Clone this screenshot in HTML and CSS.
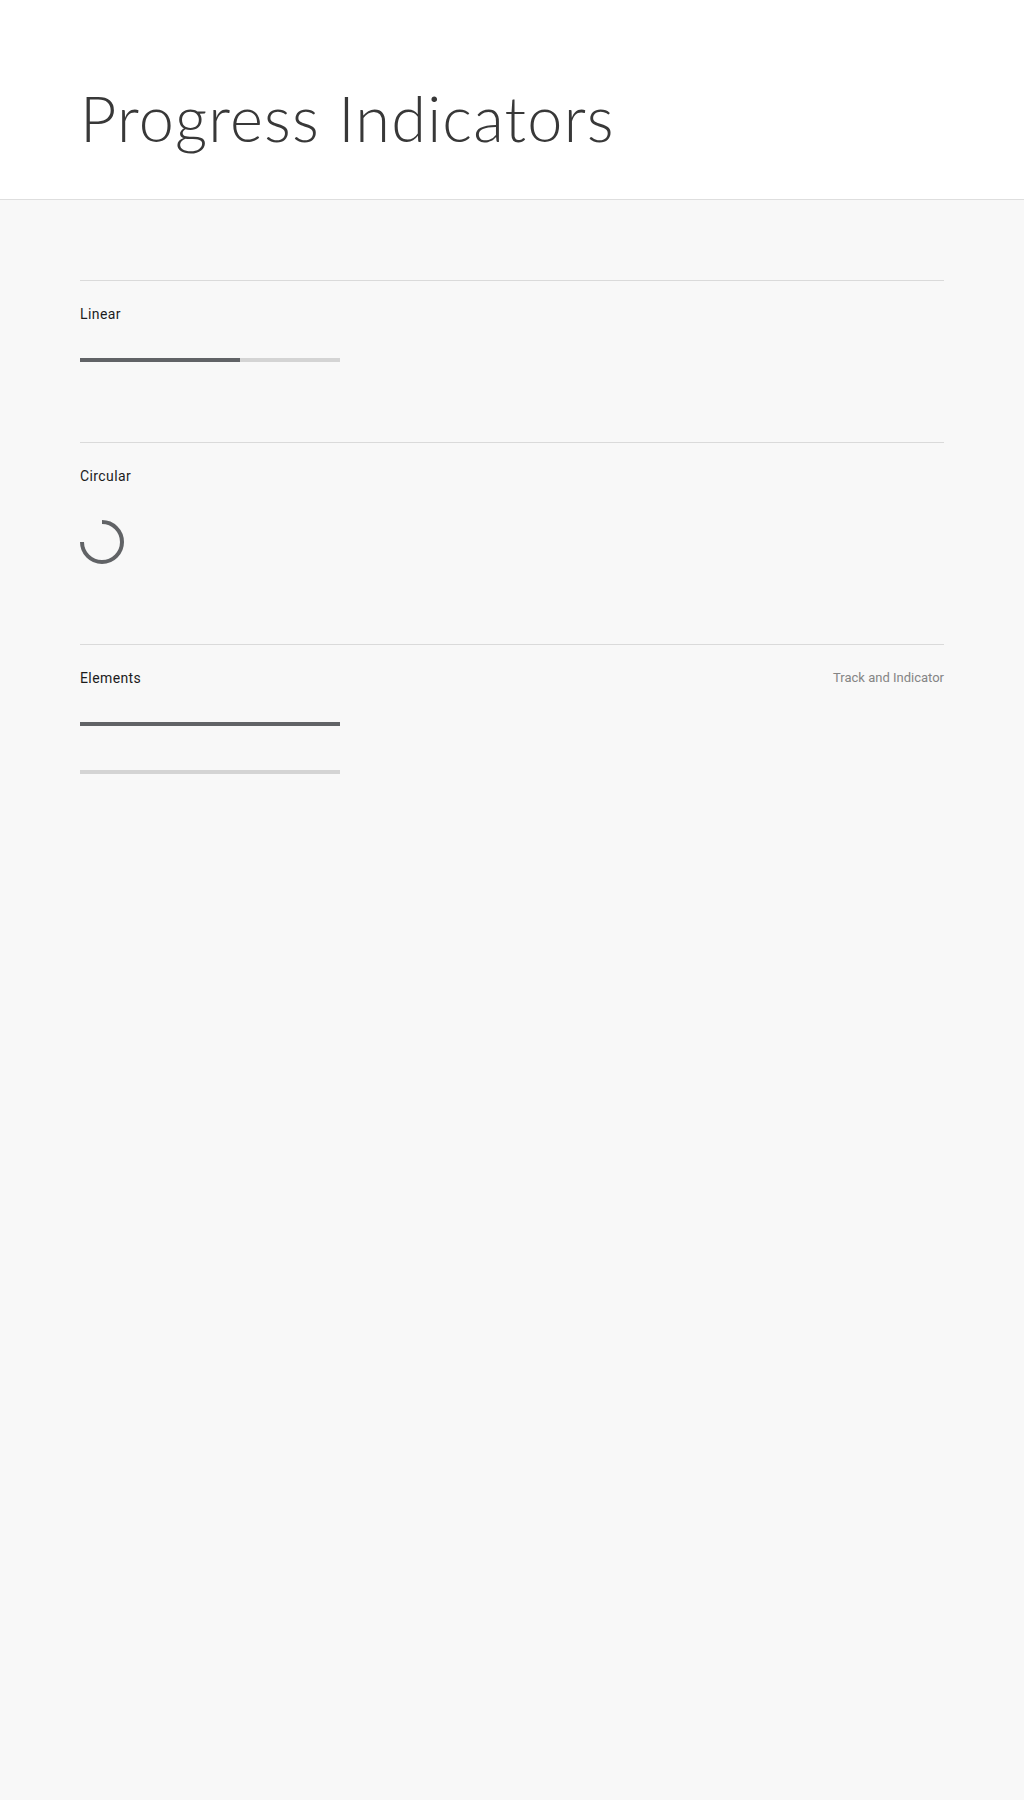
FILE: index.html
```html
<!DOCTYPE html>
<html lang="en">
<head>
    <meta charset="UTF-8">
    <meta name="viewport" content="width=device-width, initial-scale=1.0">
    <title>Progress Indicators</title>
    <link rel="stylesheet" href="styles.css">
</head>
<body>
    <header class="page-header">
        <h1 class="page-title">Progress Indicators</h1>
    </header>

    <main class="content">
        <section class="demo">
            <div class="demo-head">
                <h2 class="demo-label">Linear</h2>
            </div>
            <div class="linear">
                <div class="linear-bar" style="width: 61.5%;"></div>
            </div>
        </section>

        <section class="demo">
            <div class="demo-head">
                <h2 class="demo-label">Circular</h2>
            </div>
            <svg class="circular" width="44" height="44" viewBox="0 0 44 44">
                <!-- three quarters of the ring, open in the top-left -->
                <path d="M22 2 A20 20 0 1 1 2 22" fill="none" stroke="#616366" stroke-width="4"/>
            </svg>
        </section>

        <section class="demo">
            <div class="demo-head">
                <h2 class="demo-label">Elements</h2>
                <span class="demo-note">Track and Indicator</span>
            </div>
            <div class="element-list">
                <div class="element element-indicator"></div>
                <div class="element element-track"></div>
            </div>
        </section>
    </main>
</body>
</html>
```

FILE: styles.css
```css
* {
    margin: 0;
    padding: 0;
    box-sizing: border-box;
}

body {
    font-family: Roboto, 'Liberation Sans', sans-serif;
    background: #f8f8f8;
    min-height: 100vh;
}

.page-header {
    background: #fff;
    border-bottom: 1px solid #dedede;
    height: 200px;
    padding: 80px 80px 0;
}

.page-title {
    font-family: Lato, 'Open Sans', sans-serif;
    font-weight: 300;
    font-size: 63px;
    line-height: 72px;
    letter-spacing: 1.2px;
    color: #383838;
    margin-top: 2px;
}

.content {
    padding: 80px 80px 0;
}

.demo {
    border-top: 1px solid #dadada;
    padding: 23px 0 80px;
}

.demo-head {
    display: flex;
    justify-content: space-between;
    align-items: center;
    height: 20px;
    margin-bottom: 34px;
}

.demo-label {
    font-size: 14px;
    font-weight: 400;
    line-height: 20px;
    letter-spacing: 0.4px;
    color: #1c1c1c;
}

.demo-note {
    font-size: 13px;
    line-height: 20px;
    color: #858585;
}

.linear {
    width: 260px;
    height: 4px;
    background: #d4d4d4;
}

.linear-bar {
    height: 100%;
    background: #616366;
}

.circular {
    display: block;
}

.element-list {
    display: flex;
    flex-direction: column;
    gap: 44px;
}

.element {
    width: 260px;
    height: 4px;
}

.element-indicator {
    background: #616366;
}

.element-track {
    background: #d4d4d4;
}
```
